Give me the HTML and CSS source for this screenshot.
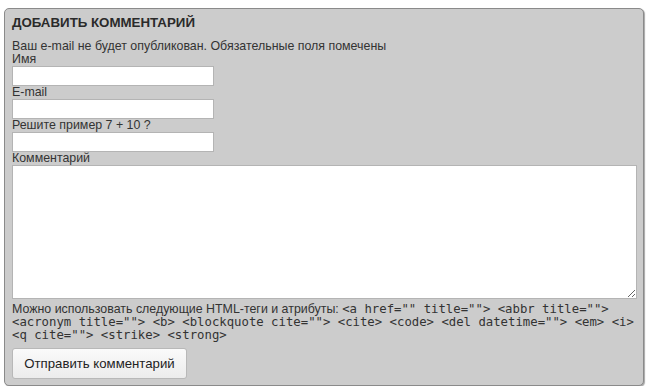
FILE: index.html
```html
<!DOCTYPE html>
<html lang="ru">
<head>
<meta charset="utf-8">
<link rel="stylesheet" href="styles.css">
</head>
<body>
<div class="respond">
  <h3 class="title">ДОБАВИТЬ КОММЕНТАРИЙ</h3>
  <form class="form">
    <p class="notes">Ваш e-mail не будет опубликован. Обязательные поля помечены</p>
    <label class="label">Имя</label>
    <input class="field" type="text">
    <label class="label">E-mail</label>
    <input class="field" type="text">
    <label class="label">Решите пример 7 + 10 ?</label>
    <input class="field" type="text">
    <label class="label">Комментарий</label>
    <textarea class="comment"></textarea>
    <p class="allowed">Можно использовать следующие HTML-теги и атрибуты: <code>&lt;a href="" title=""&gt; &lt;abbr title=""&gt; &lt;acronym title=""&gt; &lt;b&gt; &lt;blockquote cite=""&gt; &lt;cite&gt; &lt;code&gt; &lt;del datetime=""&gt; &lt;em&gt; &lt;i&gt; &lt;q cite=""&gt; &lt;strike&gt; &lt;strong&gt; </code></p>
    <div class="actions"><button class="submit" type="button">Отправить комментарий</button></div>
  </form>
</div>
</body>
</html>
```
FILE: styles.css
```css
html, body {
  margin: 0;
  padding: 0;
  background: #ffffff;
}
body {
  padding: 8px 6px 0 4px;
  font-family: "Liberation Sans", Arial, sans-serif;
  color: #333333;
}
.respond {
  box-sizing: border-box;
  width: 640px;
  height: 378px;
  background: #cccccc;
  border: 1px solid #8a8a8a;
  border-radius: 5px;
  box-shadow: 1px 1px 1px rgba(0,0,0,0.35);
  padding: 6px 7px 0 7px;
}
.title {
  margin: 0;
  font-size: 13.3px;
  line-height: 16px;
  font-weight: bold;
  color: #2a2a2a;
}
.form {
  display: flex;
  flex-direction: column;
  align-items: flex-start;
  margin-top: 9px;
}
.notes {
  margin: 0;
  font-size: 12.4px;
  line-height: 13px;
}
.label {
  display: block;
  font-size: 12.4px;
  line-height: 13px;
}
.field {
  box-sizing: border-box;
  width: 202px;
  height: 20px;
  margin: 0;
  border: 1px solid #b4b4b4;
  background: #ffffff;
  padding: 2px;
}
.comment {
  box-sizing: border-box;
  width: 625px;
  height: 134px;
  margin: 0;
  border: 1px solid #b4b4b4;
  background: #ffffff;
  resize: vertical;
}
.allowed {
  margin: 4px 0 0 0;
  font-size: 12.4px;
  line-height: 13px;
  width: 626px;
}
.allowed code {
  font-family: "DejaVu Sans Mono", monospace;
  font-size: 12.3px;
  line-height: 13px;
}
.actions {
  margin-top: 6px;
}
.submit {
  box-sizing: border-box;
  width: 175px;
  height: 31px;
  font-family: "Liberation Sans", Arial, sans-serif;
  font-size: 13.2px;
  white-space: nowrap;
  color: #222222;
  background: linear-gradient(#fafafa, #ececec);
  border: 1px solid #b8b8b8;
  border-radius: 3px;
  padding: 0;
}
```
